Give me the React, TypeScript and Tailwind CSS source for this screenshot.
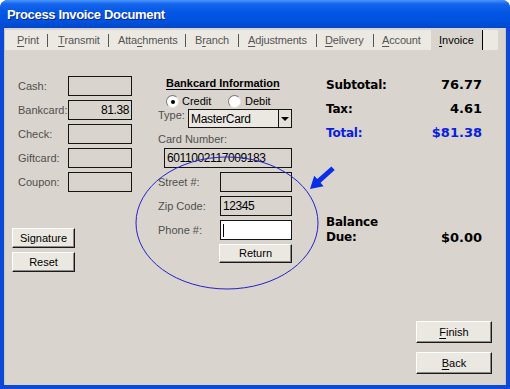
import React from "react";

const tabs = [
  { label: "Print", u: 0, w: 42, pl: 12 },
  { label: "Transmit", u: 0, w: 60, pl: 10 },
  { label: "Attachments", u: 4, w: 76, pl: 9 },
  { label: "Branch", u: 1, w: 52, pl: 9 },
  { label: "Adjustments", u: 0, w: 77, pl: 9 },
  { label: "Delivery", u: 0, w: 56, pl: 8 },
  { label: "Account", u: 0, w: 57, pl: 8 },
];

function Mn({ label, u }: { label: string; u: number }) {
  return (
    <>
      {label.slice(0, u)}
      <span className="underline underline-offset-[2px]">{label[u]}</span>
      {label.slice(u + 1)}
    </>
  );
}

function Btn({ children, w, h }: { children: React.ReactNode; w: string; h: string }) {
  return (
    <div
      className={`${w} ${h} flex items-center justify-center bg-[#ebe8e1] border border-t-white border-l-white border-r-[#1a1a1a] border-b-[#1a1a1a] shadow-[inset_-1px_-1px_0_#8a8a8a] text-[11px] text-black`}
    >
      {children}
    </div>
  );
}

function Box({ w, children, white }: { w: string; children?: React.ReactNode; white?: boolean }) {
  return (
    <div
      className={`${w} h-[20px] border border-[#141414] ${white ? "bg-white" : "bg-[#d9d4cd]"} flex items-center px-[2px] text-[12px] tracking-[-0.4px] text-black`}
    >
      {children}
    </div>
  );
}

export default function App() {
  return (
    <div className="w-[510px] h-[389px] bg-white font-['Liberation_Sans',Arial,sans-serif] relative overflow-hidden">
      <div className="w-[510px] h-[389px] rounded-t-[8px] bg-[#0a4ad6] flex flex-col overflow-hidden">
        {/* Title bar */}
        <div className="h-[28px] shrink-0 bg-[linear-gradient(180deg,#4a95fb_0%,#1566ec_14%,#0356e4_45%,#0052de_75%,#0047cc_100%)] flex items-center pl-[7px] pt-[1px]">
          <span className="text-white font-bold text-[13px] tracking-[-0.35px] [text-shadow:1px_1px_0_#0a2a90]">
            Process Invoice Document
          </span>
        </div>
        {/* Window body */}
        <div className="flex-1 flex flex-col px-[4px] pb-[4px] bg-[#0a4ad6]">
          <div className="flex-1 flex flex-col bg-[#d9d4cd] border-l border-r border-[#c9c4bc]">
            {/* tab strip */}
            <div className="mt-[1px] h-[21px] flex shrink-0 text-[11px] pt-[1px]">
              {tabs.map((t, i) => (
                <React.Fragment key={t.label}>
                  <div
                    className="h-full bg-[#ece9e3] flex items-center text-[#555] tracking-[-0.15px]"
                    style={{ width: t.w, paddingLeft: t.pl }}
                  >
                    <Mn label={t.label} u={t.u} />
                  </div>
                  {i < tabs.length - 1 && (
                    <div className="w-[1px] h-full bg-[#ece9e3] flex items-center">
                      <div className="w-[1px] h-[13px] bg-[#555]" />
                    </div>
                  )}
                </React.Fragment>
              ))}
              <div className="w-[51px] h-full bg-[#d9d4cd] flex items-center pl-[8px] text-black">
                <Mn label="Invoice" u={0} />
              </div>
              <div className="w-[1px] h-full bg-black" />
              <div className="w-[15px] h-full bg-[#ece9e3]" />
            </div>

            {/* content */}
            <div className="flex-1 flex">
              {/* left column */}
              <div className="w-[153px] pl-[7px] flex flex-col">
                <div className="mt-[26px] ml-[6px] flex flex-col gap-[4px]">
                  {["Cash:", "Bankcard:", "Check:", "Giftcard:", "Coupon:"].map((l) => (
                    <div key={l} className="flex items-center h-[20px]">
                      <div className="w-[50px] text-[11px] text-[#505050]">{l}</div>
                      <Box w="w-[64px]">
                        {l === "Bankcard:" && <span className="ml-auto">81.38</span>}
                      </Box>
                    </div>
                  ))}
                </div>
                <div className="mt-[36px] flex flex-col gap-[4px]">
                  <Btn w="w-[63px]" h="h-[20px]">Signature</Btn>
                  <Btn w="w-[63px]" h="h-[20px]">Reset</Btn>
                </div>
              </div>

              {/* middle column */}
              <div className="w-[135px] flex flex-col">
                <div className="mt-[27px] pl-[8px] h-[13px] leading-[13px] text-[11px] font-bold underline underline-offset-[2px] text-black">
                  Bankcard Information
                </div>
                <div className="mt-[5px] pl-[8px] h-[13px] flex items-center text-[11px] text-black">
                  <div className="w-[62px] flex items-center">
                    <div className="w-[13px] h-[13px] rounded-full bg-white border border-t-[#7a7a7a] border-l-[#7a7a7a] border-r-[#e6e3dc] border-b-[#e6e3dc] flex items-center justify-center">
                      <div className="w-[4px] h-[4px] rounded-full bg-black" />
                    </div>
                    <span className="ml-[3px]">Credit</span>
                  </div>
                  <div className="flex items-center">
                    <div className="w-[13px] h-[13px] rounded-full bg-white border border-t-[#7a7a7a] border-l-[#7a7a7a] border-r-[#e6e3dc] border-b-[#e6e3dc]" />
                    <span className="ml-[4px]">Debit</span>
                  </div>
                </div>
                <div className="mt-[1px] flex h-[19px]">
                  <div className="w-[30px] text-[11px] text-[#505050] leading-[12px]">Type:</div>
                  <div className="w-[104px] h-[19px] border border-[#141414] bg-[#ebe8e2] flex">
                    <div className="flex-1 flex items-center pl-[2px] text-[12px] tracking-[-0.3px] text-black">
                      MasterCard
                    </div>
                    <div className="w-[13px] h-full border-l border-[#141414] bg-[#e4e1da] flex items-center justify-center">
                      <div className="w-0 h-0 border-l-[4px] border-r-[4px] border-t-[4px] border-l-transparent border-r-transparent border-t-black" />
                    </div>
                  </div>
                </div>
                <div className="mt-[5px] h-[13px] leading-[13px] text-[11px] text-[#505050]">Card Number:</div>
                <div className="mt-[2px] ml-[6px]">
                  <Box w="w-[128px]">6011002117009183</Box>
                </div>
                <div className="mt-[4px] flex flex-col gap-[4px]">
                  {["Street #:", "Zip Code:", "Phone #:"].map((l) => (
                    <div key={l} className="flex items-center h-[20px]">
                      <div className="w-[62px] text-[11px] text-[#505050]">{l}</div>
                      <Box w="w-[72px]" white={l === "Phone #:"}>
                        {l === "Zip Code:" && "12345"}
                        {l === "Phone #:" && <div className="w-[1px] h-[13px] bg-black" />}
                      </Box>
                    </div>
                  ))}
                </div>
                <div className="mt-[4px] ml-[61px]">
                  <Btn w="w-[73px]" h="h-[19px]">Return</Btn>
                </div>
              </div>

              {/* right column */}
              <div className="flex-1 flex flex-col font-['DejaVu_Sans',Verdana,sans-serif]">
                <div className="mt-[23px] ml-[33px] w-[156px] flex flex-col font-bold">
                  <div className="h-[24px] flex items-center justify-between text-black">
                    <span className="text-[12px] tracking-[-0.2px]">Subtotal:</span>
                    <span className="text-[13px]">76.77</span>
                  </div>
                  <div className="h-[24px] flex items-center justify-between text-black">
                    <span className="text-[12px] tracking-[-0.2px]">Tax:</span>
                    <span className="text-[13px]">4.61</span>
                  </div>
                  <div className="h-[24px] flex items-center justify-between text-[#0a1ee0]">
                    <span className="text-[12px] tracking-[-0.2px]">Total:</span>
                    <span className="text-[13px]">$81.38</span>
                  </div>
                  <div className="mt-[70px] flex items-end justify-between text-black">
                    <span className="text-[12px] leading-[15px] tracking-[-0.2px]">
                      Balance
                      <br />
                      Due:
                    </span>
                    <span className="text-[13px] leading-[15px]">$0.00</span>
                  </div>
                </div>
                <div className="mt-auto self-end mr-[13px] mb-[11px] flex flex-col gap-[9px] font-['Liberation_Sans',Arial,sans-serif]">
                  <Btn w="w-[76px]" h="h-[22px]">
                    <Mn label="Finish" u={0} />
                  </Btn>
                  <Btn w="w-[76px]" h="h-[22px]">
                    <Mn label="Back" u={0} />
                  </Btn>
                </div>
              </div>
            </div>
          </div>
        </div>
      </div>

      {/* annotation overlay */}
      <svg className="absolute left-0 top-0 pointer-events-none" width="510" height="389">
        <ellipse cx="227" cy="223" rx="91" ry="66" fill="none" stroke="#2323c8" strokeWidth="1" />
        <g transform="translate(310,189) rotate(-42)">
          <polygon points="0,0 12,-7 12,-2.5 31,-2.5 31,2.5 12,2.5 12,7" fill="#0a2ee8" />
        </g>
      </svg>
    </div>
  );
}
